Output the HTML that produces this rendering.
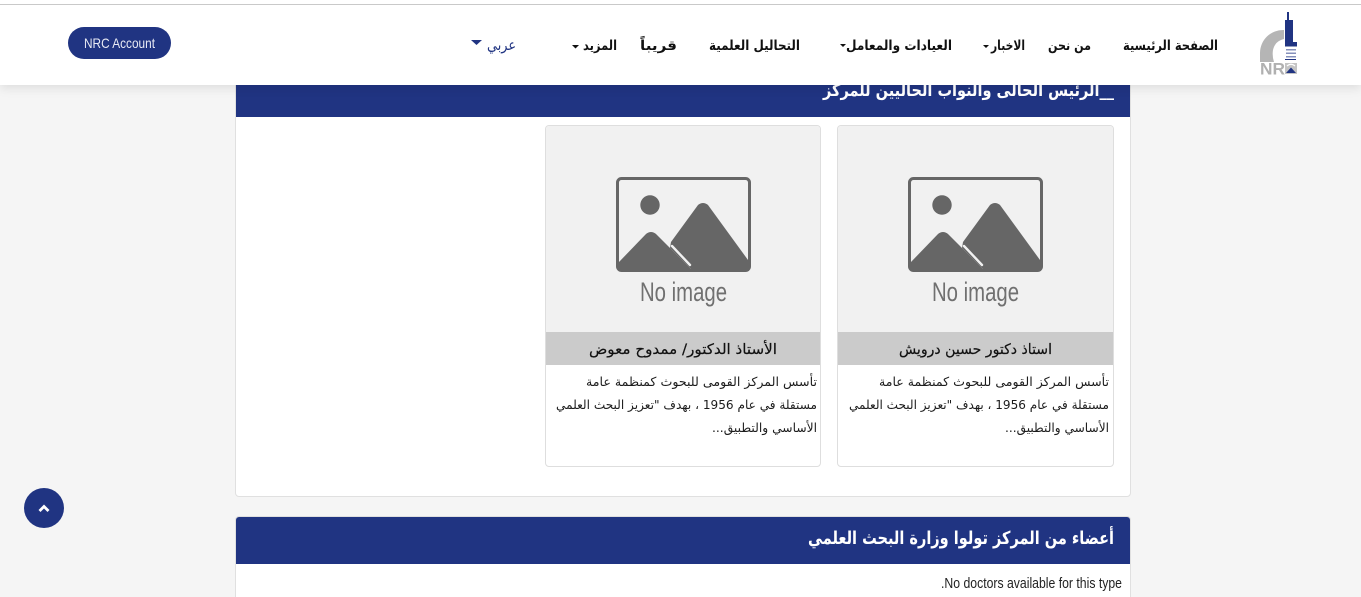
<!DOCTYPE html>
<html lang="ar" dir="rtl">
<head>
<meta charset="utf-8">
<title>NRC</title>
<style>
html,body{margin:0;padding:0;width:1361px;height:597px;overflow:hidden;background:#f5f5f5;font-family:"Liberation Sans","DejaVu Sans",sans-serif}
#wrap{position:relative;width:1361px;height:597px;overflow:hidden;background:#f5f5f5}
.box{position:absolute;box-sizing:border-box}
#top{left:0;top:0;width:1361px;height:85px;background:#fff;box-shadow:0 3px 10px rgba(0,0,0,.10);z-index:5}
#line{left:0;top:4px;width:1361px;height:1px;background:#c9c9c9;z-index:6}
#btn{left:68px;top:27px;width:103px;height:32px;border-radius:16px;background:#203482;z-index:6}
.panel{background:#fff;border:1px solid #e0e0e0;border-radius:4px}
.phead{background:#203482}
.card{background:#fff;border:1px solid #dedede;border-radius:4px;overflow:hidden}
.img{position:absolute;left:0;top:0;width:100%;height:206px;background:#f1f1f1}
.cap{position:absolute;left:0;top:206px;width:100%;height:33px;background:#cbcbcb}
#up{left:24px;top:488px;width:40px;height:40px;border-radius:50%;background:#203482}
svg.layer{position:absolute;left:0;top:0}
text{font-family:"DejaVu Sans",sans-serif}
.nav{font-size:13.5px;font-weight:700;fill:#111}
.cp{font-size:14.5px;fill:#111;stroke:#111;stroke-width:.2px}
.bd{font-size:12.5px;fill:#1c1c1c}
</style>
</head>
<body>
<div id="wrap">
<div class="box panel" style="left:235px;top:70px;width:896px;height:427px"></div>
<div class="box phead" style="left:236px;top:70px;width:894px;height:47px"></div>
<div class="box card" style="left:837px;top:125px;width:277px;height:342px"><div class="img"></div><div class="cap"></div></div>
<div class="box card" style="left:545px;top:125px;width:276px;height:342px"><div class="img"></div><div class="cap"></div></div>
<div class="box panel" style="left:235px;top:516px;width:896px;height:81px;border-bottom:0;border-radius:4px 4px 0 0"></div>
<div class="box phead" style="left:236px;top:517px;width:894px;height:47px;border-radius:3px 3px 0 0"></div>

<svg class="layer" width="1361" height="597" viewBox="0 0 1361 597" style="z-index:2;overflow:hidden">
<defs>
<g id="ph">
<rect x="909.500" y="178.500" width="132" height="92" rx="4" fill="none" stroke="#666" stroke-width="3"/>
<circle cx="942" cy="205" r="9.7" fill="#666"/>
<path d="M963 242 L990 205 Q995 201 1000 205 L1040 260 L1041 271 L985 271 L962 248 Z" fill="#666"/>
<path d="M911 262 L938 234 Q943 230 948 234 L985 271 L911 271 Z" fill="#666"/>
<path d="M964 246 L982 265" stroke="#f1f1f1" stroke-width="2.400" fill="none" stroke-linecap="round"/>
<text x="932" y="301" textLength="87" lengthAdjust="spacingAndGlyphs" style="font-family:'Liberation Sans',sans-serif;font-size:27px;fill:#707070;direction:ltr">No image</text>
</g>
</defs>
<use href="#ph"/>
<use href="#ph" x="-292"/>

<g style="direction:rtl">
<text x="1114" y="96" textLength="291" lengthAdjust="spacingAndGlyphs" style="font-size:17px;font-weight:700;fill:#fff">__الرئيس الحالى والنواب الحاليين للمركز</text>
<text x="1114" y="544" textLength="306" lengthAdjust="spacingAndGlyphs" style="font-size:18px;font-weight:700;fill:#fff">أعضاء من المركز تولوا وزارة البحث العلمي</text>

<text class="cp" x="1052" y="354" textLength="153" lengthAdjust="spacingAndGlyphs">استاذ دكتور حسين درويش</text>
<text class="cp" x="777" y="354" textLength="188" lengthAdjust="spacingAndGlyphs">الأستاذ الدكتور/ ممدوح معوض</text>

<text class="bd" x="1109" y="386" textLength="230" lengthAdjust="spacingAndGlyphs">تأسس المركز القومى للبحوث كمنظمة عامة</text>
<text class="bd" x="1109" y="409" textLength="260" lengthAdjust="spacingAndGlyphs">مستقلة في عام 1956 ، بهدف "تعزيز البحث العلمي</text>
<text class="bd" x="1109" y="432" textLength="104" lengthAdjust="spacingAndGlyphs">الأساسي والتطبيق...</text>

<text class="bd" x="817" y="386" textLength="231" lengthAdjust="spacingAndGlyphs">تأسس المركز القومى للبحوث كمنظمة عامة</text>
<text class="bd" x="817" y="409" textLength="261" lengthAdjust="spacingAndGlyphs">مستقلة في عام 1956 ، بهدف "تعزيز البحث العلمي</text>
<text class="bd" x="817" y="432" textLength="105" lengthAdjust="spacingAndGlyphs">الأساسي والتطبيق...</text>
</g>
<text x="941" y="588" textLength="181" lengthAdjust="spacingAndGlyphs" style="font-family:'Liberation Sans',sans-serif;font-size:14.500px;fill:#222;direction:ltr">.No doctors available for this type</text>
</svg>

<div class="box" id="top"></div>
<div class="box" id="line"></div>
<div class="box" id="btn"></div>

<svg class="layer" width="1361" height="597" viewBox="0 0 1361 597" style="z-index:7;pointer-events:none">
<text x="84" y="48" textLength="71" lengthAdjust="spacingAndGlyphs" style="font-family:'Liberation Sans',sans-serif;font-size:14px;fill:#e8eaf4;direction:ltr">NRC Account</text>
<g style="direction:rtl">
<text class="nav" x="1218" y="50" textLength="95" lengthAdjust="spacingAndGlyphs">الصفحة الرئيسية</text>
<text class="nav" x="1091" y="50" textLength="43" lengthAdjust="spacingAndGlyphs">من نحن</text>
<text class="nav" x="1025" y="50" textLength="34" lengthAdjust="spacingAndGlyphs">الاخبار</text>
<text class="nav" x="952" y="50" textLength="106" lengthAdjust="spacingAndGlyphs">العيادات والمعامل</text>
<text class="nav" x="800" y="50" textLength="91" lengthAdjust="spacingAndGlyphs">التحاليل العلمية</text>
<text class="nav" x="677" y="50" textLength="37" lengthAdjust="spacingAndGlyphs">قريباً</text>
<text class="nav" x="617" y="50" textLength="34" lengthAdjust="spacingAndGlyphs">المزيد</text>
<text x="516" y="50" textLength="29" lengthAdjust="spacingAndGlyphs" style="font-size:15px;fill:#203482">عربي</text>
</g>
<path d="M983 45h6l-3 3z M840 44h6l-3 3z M572 45h7l-3.500 3.500z" fill="#111"/>
<path d="M471 40h11l-5.500 5z" fill="#203482"/>

<!-- logo -->
<path d="M1284 30 A23 23 0 0 0 1260 53 V62 H1274 Q1272 56 1273 50 Q1275 41 1284 39 Z" fill="#b5b5b5"/>
<path d="M1287 12h2v9h-2z" fill="#203482"/>
<path d="M1285 20h8v22h-8z" fill="#203482"/>
<path d="M1285 42h12v4.500h-12z" fill="#203482"/>
<path d="M1286 49h10v1.500h-10zM1286 52.500h10v1.500h-10zM1286 56h10v1.500h-10z" fill="#8590bb"/>
<path d="M1285 59h11v1h-11z" fill="#203482"/>
<text x="1260" y="74.500" textLength="25" lengthAdjust="spacingAndGlyphs" style="font-family:'Liberation Sans',sans-serif;font-size:17px;font-weight:700;fill:#b0b0b0;direction:ltr">NR</text>
<path d="M1285 63h12v11h-12z" fill="#c4c4c4"/>
<path d="M1286 73l5-5.500 5 5.500z" fill="#203482"/>
<path d="M1287 66q4-3.500 8 0" fill="none" stroke="#fff" stroke-width="1.200"/>
</svg>

<div class="box" id="up" style="z-index:8">
<svg width="40" height="40" viewBox="0 0 40 40" style="position:absolute;left:0;top:0"><path d="M15.500 23 L20 18.500 L24.500 23" fill="none" stroke="#fff" stroke-width="2.800"/></svg>
</div>
</div>
</body>
</html>
